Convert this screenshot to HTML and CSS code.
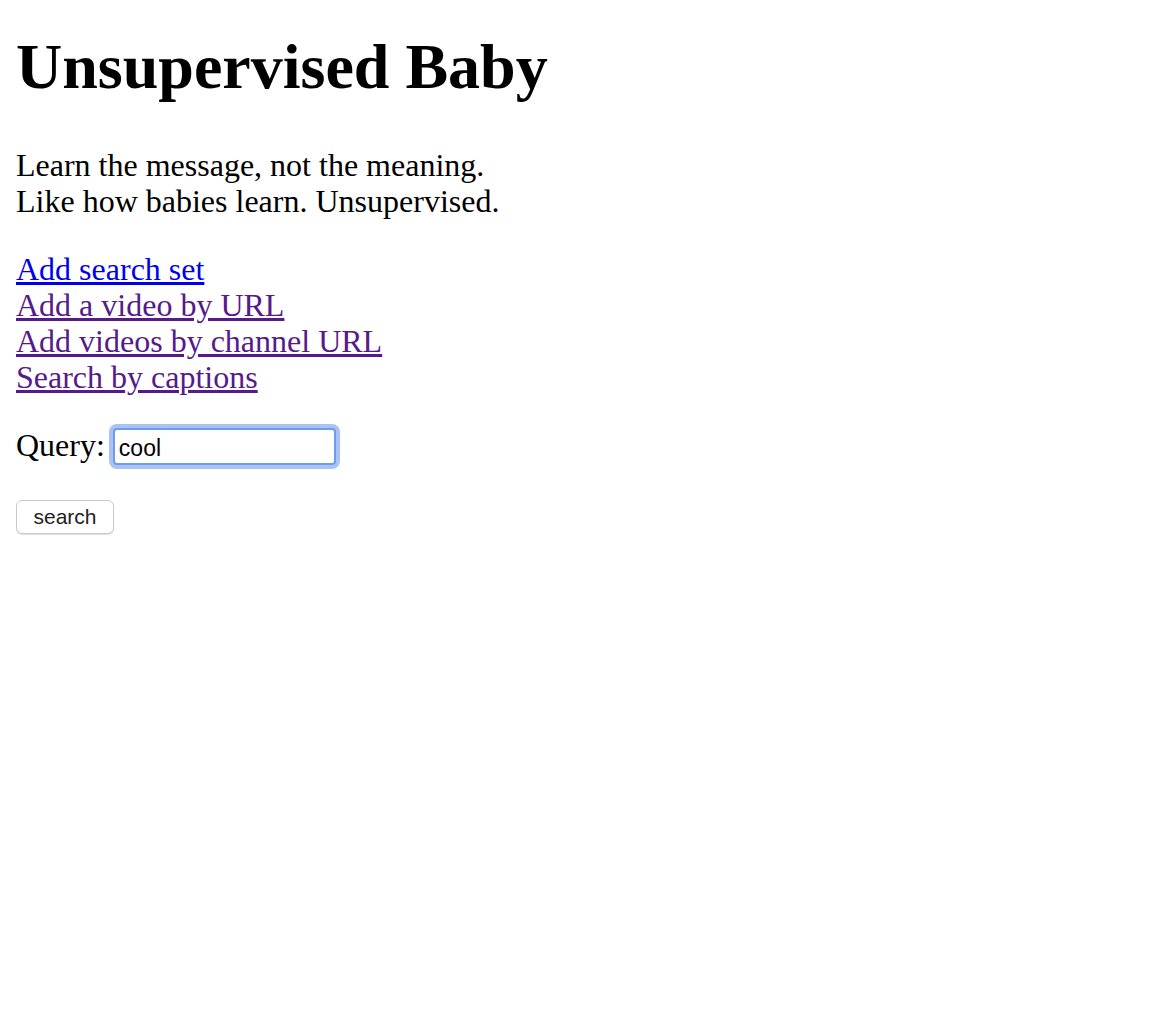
FILE: index.html
```html
<!DOCTYPE html>
<html lang="en">
<head>
  <meta charset="UTF-8" />
  <title>Unsupervised Baby</title>
  <link rel="stylesheet" href="styles.css">
</head>
<body>
  <h1 class="title">Unsupervised Baby</h1>
  <p class="tagline">Learn the message, not the meaning.<br>Like how babies learn. Unsupervised.</p>
  <p class="links">
    <a href="#" class="link">Add search set</a><br>
    <a href="#" class="link visited">Add a video by URL</a><br>
    <a href="#" class="link visited">Add videos by channel URL</a><br>
    <a href="#" class="link visited">Search by captions</a>
  </p>
  <form class="search-form">
    <p class="query-row">
      <label class="query-label">Query: <input type="text" class="query-input" name="query" value="cool" /></label>
    </p>
    <p class="button-row">
      <button type="submit" class="btn">search</button>
    </p>
  </form>
</body>
</html>
```

FILE: styles.css
```css
body {
  margin: 16px;
  font-family: "Liberation Serif", "Times New Roman", serif;
  font-size: 32px;
  line-height: 36px;
  color: #000;
  background: #fff;
}

.title {
  font-size: 64px;
  line-height: 74px;
  font-weight: 700;
  margin: 14px 0 43px;
}

.tagline,
.links {
  margin: 32px 0;
}

.link {
  color: #0000ee;
}

.link.visited {
  color: #551a8b;
}

.query-row {
  margin: 32px 0 0;
  height: 36px;
}

.query-input {
  box-sizing: border-box;
  width: 223px;
  height: 37px;
  padding: 5px 4px 0;
  margin: 0;
  border: 2px solid #6d9cee;
  border-radius: 4px;
  box-shadow: 0 0 0 4px #a8c3f4;
  outline: none;
  font-family: "Liberation Sans", Arial, sans-serif;
  font-size: 23px;
  color: #000;
  caret-color: #000;
  vertical-align: 0;
}

.button-row {
  margin: 32px 0;
}

.btn {
  width: 98px;
  height: 34px;
  padding: 0;
  background: #fff;
  border: 1px solid #c9c9c9;
  border-radius: 6px;
  box-shadow: 0 1px 1px rgba(0, 0, 0, 0.12);
  font-family: "Liberation Sans", Arial, sans-serif;
  font-size: 21px;
  color: #222;
  cursor: pointer;
}
```
